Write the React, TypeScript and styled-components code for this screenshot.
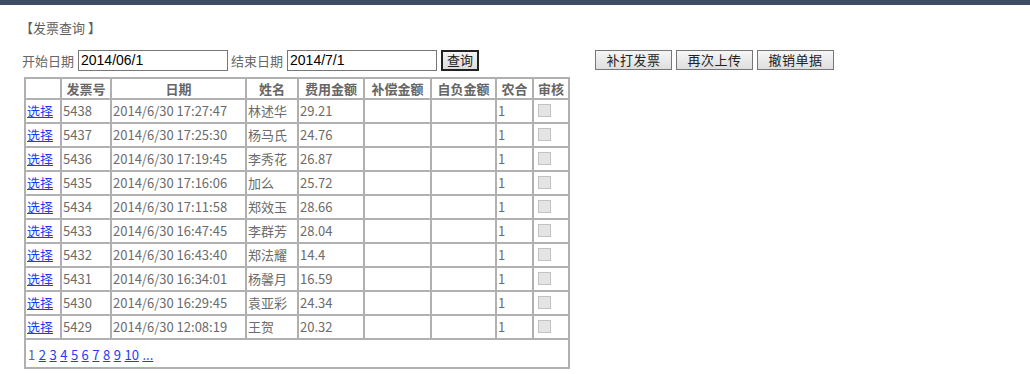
import styled, { createGlobalStyle } from "styled-components";

const GlobalStyle = createGlobalStyle`
  html, body {
    margin: 0;
    padding: 0;
    background: #fff;
  }
  body {
    font-family: "Noto Sans CJK SC", "Noto Sans", sans-serif;
    font-size: 13px;
    color: #666;
  }
`;

const TopBar = styled.div`
  height: 5px;
  background: #3d4d63;
`;

const Page = styled.div`
  padding: 13px 0 0 22px;
`;

const Title = styled.div`
  height: 20px;
  line-height: 20px;
  color: #5f5f5f;
  font-size: 13px;
  margin-left: -2px;
`;

const SearchRow = styled.div`
  display: flex;
  align-items: center;
  margin-top: 11px;
  height: 22px;
`;

const Label = styled.span`
  color: #666;
  margin-right: 4px;
  font-size: 13px;
`;

const DateInput = styled.input`
  box-sizing: border-box;
  width: 150px;
  height: 21px;
  border: 1px solid #777;
  padding: 0 2px;
  margin: 0 3px 0 0;
  font-family: "Liberation Sans", Arial, sans-serif;
  font-size: 14px;
  color: #000;
  background: #fff;
  outline: none;
`;

const QueryButton = styled.button`
  box-sizing: border-box;
  height: 21px;
  width: 38px;
  margin-left: 1px;
  padding: 0 0 2px;
  line-height: 15px;
  border: 2px solid #222;
  background: linear-gradient(#f4f4f4, #dcdcdc);
  font-family: "Noto Sans CJK SC", sans-serif;
  font-size: 13px;
  color: #222;
`;

const ActionButton = styled.button<{ $first?: boolean }>`
  box-sizing: border-box;
  height: 20px;
  width: 77px;
  margin-left: ${({ $first }) => ($first ? "116px" : "4px")};
  padding: 0 0 1px;
  line-height: 16px;
  border: 1px solid #777;
  background: linear-gradient(#f6f6f6, #dedede);
  font-family: "Noto Sans CJK SC", sans-serif;
  font-size: 13px;
  color: #222;
  letter-spacing: 0.5px;
`;

const Table = styled.table`
  margin-top: 6px;
  margin-left: 2px;
  border-collapse: collapse;
  table-layout: fixed;
  width: 544px;
  border: 2px solid #a8a8a8;
`;

const Th = styled.th`
  height: 19px;
  border: 2px solid #b0b0b0;
  padding: 0;
  font-weight: bold;
  color: #666;
  font-size: 13px;
  line-height: 18px;
  text-align: center;
`;

const Td = styled.td`
  height: 22px;
  border: 2px solid #b0b0b0;
  padding: 0 0 0 1px;
  color: #6b6b6b;
  font-size: 13px;
  line-height: 18px;
  white-space: nowrap;
  overflow: hidden;
`;

const Link = styled.a`
  color: #1c3df5;
  text-decoration: underline;
  cursor: pointer;
`;

const Check = styled.span`
  display: inline-block;
  box-sizing: border-box;
  width: 13px;
  height: 13px;
  margin: 2px 0 0 3px;
  border: 1px solid #c2c2c2;
  background: #e4e4e4;
  vertical-align: top;
`;

const PagerCell = styled.td`
  height: 26px;
  border: 2px solid #b0b0b0;
  padding: 1px 0 0 2px;
  font-size: 13px;
  color: #666;
`;

const PageLink = styled(Link)`
  margin-left: 3.5px;
`;

const cols = [36, 50, 135, 52, 66, 67, 65, 37, 36];
const headers = ["", "发票号", "日期", "姓名", "费用金额", "补偿金额", "自负金额", "农合", "审核"];

const rows = [
  ["5438", "2014/6/30 17:27:47", "林述华", "29.21"],
  ["5437", "2014/6/30 17:25:30", "杨马氏", "24.76"],
  ["5436", "2014/6/30 17:19:45", "李秀花", "26.87"],
  ["5435", "2014/6/30 17:16:06", "加么", "25.72"],
  ["5434", "2014/6/30 17:11:58", "郑效玉", "28.66"],
  ["5433", "2014/6/30 16:47:45", "李群芳", "28.04"],
  ["5432", "2014/6/30 16:43:40", "郑法耀", "14.4"],
  ["5431", "2014/6/30 16:34:01", "杨馨月", "16.59"],
  ["5430", "2014/6/30 16:29:45", "袁亚彩", "24.34"],
  ["5429", "2014/6/30 12:08:19", "王贺", "20.32"],
];

export default function App() {
  return (
    <>
      <GlobalStyle />
      <TopBar />
      <Page>
        <Title>【发票查询 】</Title>
        <SearchRow>
          <Label>开始日期</Label>
          <DateInput defaultValue="2014/06/1" />
          <Label>结束日期</Label>
          <DateInput defaultValue="2014/7/1" />
          <QueryButton>查询</QueryButton>
          <ActionButton $first>补打发票</ActionButton>
          <ActionButton>再次上传</ActionButton>
          <ActionButton>撤销单据</ActionButton>
        </SearchRow>
        <Table>
          <colgroup>
            {cols.map((w, i) => (
              <col key={i} style={{ width: w }} />
            ))}
          </colgroup>
          <thead>
            <tr>
              {headers.map((h, i) => (
                <Th key={i}>{h}</Th>
              ))}
            </tr>
          </thead>
          <tbody>
            {rows.map(([no, date, name, fee]) => (
              <tr key={no}>
                <Td>
                  <Link>选择</Link>
                </Td>
                <Td>{no}</Td>
                <Td>{date}</Td>
                <Td>{name}</Td>
                <Td>{fee}</Td>
                <Td />
                <Td />
                <Td>1</Td>
                <Td>
                  <Check />
                </Td>
              </tr>
            ))}
            <tr>
              <PagerCell colSpan={9}>
                <span>1</span>
                {["2", "3", "4", "5", "6", "7", "8", "9", "10", "..."].map((p) => (
                  <PageLink key={p}>{p}</PageLink>
                ))}
              </PagerCell>
            </tr>
          </tbody>
        </Table>
      </Page>
    </>
  );
}
